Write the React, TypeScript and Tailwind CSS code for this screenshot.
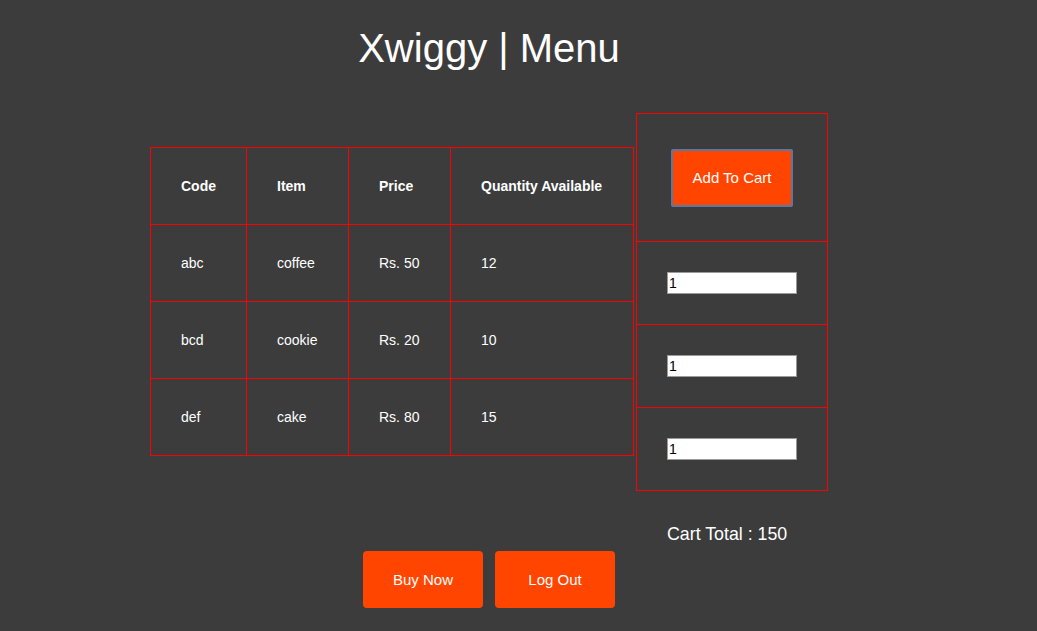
import React from "react";

const rows = [
  { code: "abc", item: "coffee", price: "Rs. 50", qty: "12" },
  { code: "bcd", item: "cookie", price: "Rs. 20", qty: "10" },
  { code: "def", item: "cake", price: "Rs. 80", qty: "15" },
];

export default function App() {
  return (
    <div
      className="min-h-[631px] w-full bg-[#3c3c3c] text-white"
      style={{ fontFamily: '"Liberation Sans", Arial, sans-serif' }}
    >
      <div className="ml-[150px] w-[678px]">
        <h1 className="pt-[25px] text-center text-[40px] leading-[46px] font-normal">
          Xwiggy | Menu
        </h1>

        <div className="mt-[42px] flex items-start">
          <table className="mt-[34px] w-[484px] border-collapse border border-[#ff0000] text-[14px] leading-[16px]">
            <thead>
              <tr>
                <th className="w-[96px] border border-[#ff0000] p-[30px] text-left font-bold">Code</th>
                <th className="w-[102px] border border-[#ff0000] p-[30px] text-left font-bold">Item</th>
                <th className="w-[102px] border border-[#ff0000] p-[30px] text-left font-bold">Price</th>
                <th className="border border-[#ff0000] p-[30px] text-left font-bold">Quantity Available</th>
              </tr>
            </thead>
            <tbody>
              {rows.map((r) => (
                <tr key={r.code}>
                  <td className="border border-[#ff0000] p-[30px]">{r.code}</td>
                  <td className="border border-[#ff0000] p-[30px]">{r.item}</td>
                  <td className="border border-[#ff0000] p-[30px]">{r.price}</td>
                  <td className="border border-[#ff0000] p-[30px]">{r.qty}</td>
                </tr>
              ))}
            </tbody>
          </table>

          <div className="ml-[2px] flex w-[192px] flex-col border border-[#ff0000]">
            <div className="flex h-[127px] items-center pl-[34px]">
              <button className="h-[58px] w-[122px] rounded-[2px] border-2 border-[#5b78a0] bg-[#ff4500] pt-[2px] text-[15px] text-white">
                Add To Cart
              </button>
            </div>
            {[0, 1, 2].map((i) => (
              <div
                key={i}
                className="flex h-[83px] items-center border-t border-[#ff0000] pl-[30px]"
              >
                <input
                  defaultValue="1"
                  className="h-[22px] w-[130px] border border-[#9a9a9a] bg-white px-[1px] text-[14px] text-black outline-none"
                />
              </div>
            ))}
          </div>
        </div>

        <div className="mt-[33px] pl-[517px] text-[17.8px] leading-[21px]">
          Cart Total : 150
        </div>

        <div className="mt-[6px] flex justify-center gap-[12px]">
          <button className="h-[57px] w-[120px] rounded-[4px] bg-[#ff4500] pt-[2px] text-[15px] text-white">
            Buy Now
          </button>
          <button className="h-[57px] w-[120px] rounded-[4px] bg-[#ff4500] pt-[2px] text-[15px] text-white">
            Log Out
          </button>
        </div>
      </div>
    </div>
  );
}
